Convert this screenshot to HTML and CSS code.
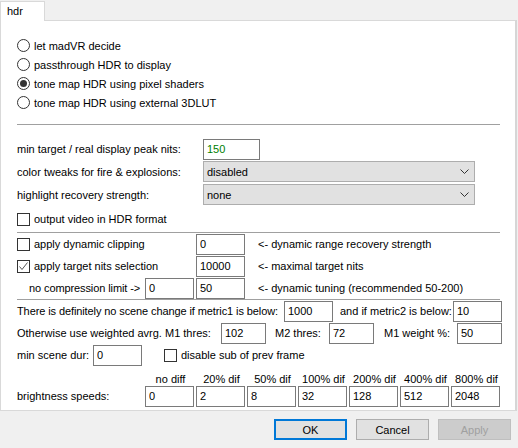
FILE: index.html
```html
<!DOCTYPE html>
<html lang="en">
<head>
    <meta charset="UTF-8">
    <title>hdr</title>
    <link rel="stylesheet" href="styles.css">
</head>
<body>
    <div class="tabs">
        <div class="tab">hdr</div>
    </div>
    <div class="panel">
        <!-- mode -->
        <div class="radios">
            <div class="row-r"><span class="radio"></span>let madVR decide</div>
            <div class="row-r"><span class="radio"></span>passthrough HDR to display</div>
            <div class="row-r"><span class="radio on"></span>tone map HDR using pixel shaders</div>
            <div class="row-r"><span class="radio"></span>tone map HDR using external 3DLUT</div>
        </div>
        <hr class="sep first">

        <div class="row">
            <span class="label w186">min target / real display peak nits:</span>
            <input class="field nits" value="150">
        </div>
        <div class="row tight">
            <span class="label w186">color tweaks for fire &amp; explosions:</span>
            <div class="combo">disabled<svg width="9" height="5" viewBox="0 0 9 5"><path d="M0.5 0.5 L4.5 4.5 L8.5 0.5" fill="none" stroke="#333"/></svg></div>
        </div>
        <div class="row tight">
            <span class="label w186">highlight recovery strength:</span>
            <div class="combo">none<svg width="9" height="5" viewBox="0 0 9 5"><path d="M0.5 0.5 L4.5 4.5 L8.5 0.5" fill="none" stroke="#333"/></svg></div>
        </div>
        <div class="row check-row">
            <span class="check"></span>output video in HDR format
        </div>
        <hr class="sep">

        <!-- dynamic -->
        <div class="row">
            <span class="label w179"><span class="check"></span>apply dynamic clipping</span>
            <input class="field" value="0">
            <span class="note">&lt;- dynamic range recovery strength</span>
        </div>
        <div class="row">
            <span class="label w179"><span class="check on"><svg width="11" height="11" viewBox="0 0 11 11"><path d="M1.5 5.5 L4 8.5 L9.5 1.5" fill="none" stroke="#555" stroke-width="1"/></svg></span>apply target nits selection</span>
            <input class="field" value="10000">
            <span class="note">&lt;- maximal target nits</span>
        </div>
        <div class="row">
            <span class="label w116 indent narrow">no compression limit -&gt;</span>
            <input class="field" value="0">
            <input class="field" value="50">
            <span class="note">&lt;- dynamic tuning (recommended 50-200)</span>
        </div>
        <hr class="sep">

        <!-- scene change -->
        <div class="row">
            <span class="label w267 narrow">There is definitely no scene change if metric1 is below:</span>
            <input class="field" value="1000">
            <span class="label w118 gap5">and if metric2 is below:</span>
            <input class="field" value="10">
        </div>
        <div class="row">
            <span class="label w204">Otherwise use weighted avrg. M1 thres:</span>
            <input class="field w45" value="102">
            <span class="label w61 gap7">M2 thres:</span>
            <input class="field w45" value="72">
            <span class="label w73 gap8">M1 weight %:</span>
            <input class="field w45" value="50">
        </div>
        <div class="row">
            <span class="label w76">min scene dur:</span>
            <input class="field" value="0">
            <span class="label gap20"><span class="check"></span>disable sub of prev frame</span>
        </div>

        <!-- speeds -->
        <div class="speeds">
            <div class="heads">
                <span>no diff</span>
                <span>20% dif</span>
                <span>50% dif</span>
                <span>100% dif</span>
                <span>200% dif</span>
                <span>400% dif</span>
                <span>800% dif</span>
            </div>
            <div class="row">
                <span class="label w128">brightness speeds:</span>
                <input class="field" value="0">
                <input class="field" value="2">
                <input class="field" value="8">
                <input class="field" value="32">
                <input class="field" value="128">
                <input class="field" value="512">
                <input class="field" value="2048">
            </div>
        </div>
    </div>

    <div class="buttons">
        <button class="btn default">OK</button>
        <button class="btn">Cancel</button>
        <button class="btn" disabled>Apply</button>
    </div>
</body>
</html>
```

FILE: styles.css
```css
body {
    margin: 0;
    width: 518px;
    height: 448px;
    background: #f0f0f0;
    font-family: "Liberation Sans", Arial, sans-serif;
    font-size: 11px;
    color: #000;
    overflow: hidden;
}

.tabs {
    height: 20px;
    display: flex;
    align-items: flex-end;
}

.tab {
    width: 45px;
    height: 20px;
    box-sizing: border-box;
    border: 1px solid #d9d9d9;
    border-bottom: none;
    background: white;
    padding: 3px 0 0 6px;
    position: relative;
    top: 1px;
    z-index: 1;
}

.panel {
    width: 517px;
    height: 391px;
    box-sizing: border-box;
    background: white;
    border: 1px solid #d9d9d9;
    border-right: 2px solid #d6d6d6;
    padding: 15px 0 0 16px;
}

.radios {
    display: flex;
    flex-direction: column;
}

.row-r {
    height: 19px;
    display: flex;
    align-items: center;
}

.radio {
    width: 11px;
    height: 11px;
    border: 1px solid #333;
    border-radius: 50%;
    margin-right: 4px;
    display: inline-flex;
    align-items: center;
    justify-content: center;
}

.radio.on::after {
    content: "";
    width: 7px;
    height: 7px;
    border-radius: 50%;
    background: #333;
}

.sep {
    width: 483px;
    margin: 0;
    border: none;
    border-top: 1px solid #a0a0a0;
}

.sep.first {
    margin: 12px 0 13px;
}

.row {
    height: 22px;
    display: flex;
    align-items: center;
}

.row.tight {
    height: 23px;
}

.label {
    display: inline-flex;
    align-items: center;
    flex-shrink: 0;
    white-space: nowrap;
}

.narrow {
    letter-spacing: -0.1px;
}

.w186 { width: 186px; }
.w179 { width: 179px; }
.w116 { width: 116px; }
.w267 { width: 267px; }
.w118 { width: 113px; }
.w204 { width: 204px; }
.w61 { width: 54px; }
.w73 { width: 73px; }
.w76 { width: 76px; }
.w128 { width: 128px; }

.indent { margin-left: 12px; }
.gap5 { margin-left: 5px; }
.gap7 { margin-left: 7px; }
.gap8 { margin-left: 8px; }
.gap20 { margin-left: 20px; }

.check {
    width: 11px;
    height: 11px;
    border: 1px solid #333;
    margin-right: 4px;
    display: inline-flex;
    align-items: center;
    justify-content: center;
    flex-shrink: 0;
}

.check-row {
    height: 26px;
}

.field {
    width: 49px;
    height: 21px;
    box-sizing: border-box;
    border: 1px solid #7a7a7a;
    margin: 0 2px 0 0;
    padding: 0 0 0 3px;
    font: inherit;
    color: #000;
    background: white;
    outline: none;
}

.field.w45 { width: 45px; }

.field.nits {
    width: 57px;
    color: #008000;
}

.combo {
    width: 272px;
    height: 21px;
    box-sizing: border-box;
    border: 1px solid #adadad;
    background: #e1e1e1;
    padding: 0 5px 0 3px;
    display: flex;
    align-items: center;
    justify-content: space-between;
}

.note {
    margin-left: 11px;
    white-space: nowrap;
}

.speeds {
    margin-top: 7px;
}

.heads {
    display: flex;
    padding-left: 128px;
    height: 12px;
    align-items: center;
}

.heads span {
    width: 51px;
    text-align: center;
    white-space: nowrap;
}

.buttons {
    display: flex;
    justify-content: flex-end;
    gap: 9px;
    padding: 8px 7px 0 0;
}

.btn {
    width: 73px;
    height: 21px;
    box-sizing: border-box;
    border: 1px solid #adadad;
    background: #e1e1e1;
    font: inherit;
    color: #000;
    padding: 0;
}

.btn.default {
    border: 2px solid #0078d7;
}

.btn:disabled {
    background: #cccccc;
    border-color: #bfbfbf;
    color: #a0a0a0;
}
```
